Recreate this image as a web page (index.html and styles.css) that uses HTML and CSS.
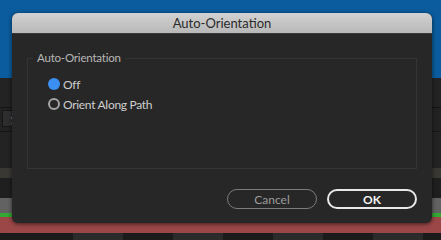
FILE: index.html
```html
<!DOCTYPE html>
<html>
<head>
<meta charset="utf-8">
<link rel="stylesheet" href="styles.css">
</head>
<body>
<div class="app">
  <div class="bg-blue"></div>
  <div class="bg-dark1"></div>
  <div class="bg-field"><span class="field-box">1</span></div>
  <div class="bg-dark2"></div>
  <div class="bg-band"></div>
  <div class="bg-dark3"></div>
  <div class="bg-gray"></div>
  <div class="bg-green"></div>
  <div class="bg-red"></div>
  <div class="bg-checker"></div>

  <div class="dialog">
    <div class="titlebar">Auto-Orientation</div>
    <div class="dialog-body">
      <fieldset class="group">
        <legend class="group-title">Auto-Orientation</legend>
        <div class="options">
          <div class="option"><span class="radio checked"></span><span class="label">Off</span></div>
          <div class="option"><span class="radio"></span><span class="label">Orient Along Path</span></div>
        </div>
      </fieldset>
    </div>
    <div class="footer">
      <button class="btn btn-cancel">Cancel</button>
      <button class="btn btn-ok">OK</button>
    </div>
  </div>
</div>
</body>
</html>
```
FILE: styles.css
```css
html, body {
  margin: 0;
  padding: 0;
  width: 441px;
  height: 240px;
  overflow: hidden;
  background: #1f1f1f;
  font-family: Lato, "Liberation Sans", sans-serif;
}
.app {
  position: relative;
  width: 441px;
  height: 240px;
  display: flex;
  flex-direction: column;
}
.bg-blue { height: 78px; background: #0a5c9e; }
.bg-dark1 { height: 29px; background: #232323; border-bottom: 1px solid #151515; }
.bg-field {
  height: 24px;
  background: #222;
  border-bottom: 1px solid #161616;
  display: flex;
  align-items: flex-start;
  padding-top: 2px;
  box-sizing: border-box;
}
.field-box {
  margin-left: 2px;
  width: 14px;
  height: 17px;
  background: #2e2e2e;
  border: 1px solid #161616;
  color: #bbb;
  font-size: 11px;
  line-height: 17px;
  padding-left: 7px;
  box-sizing: border-box;
}
.bg-dark2 { height: 36px; background: #232323; }
.bg-band { height: 10px; background: #3a3833; }
.bg-dark3 { height: 20px; background: #1f1f1f; }
.bg-gray { height: 15px; background: #626262; }
.bg-green { height: 4px; background: #33a833; }
.bg-red { height: 16px; background: #9c4747; }
.bg-checker {
  flex: 1;
  background: repeating-linear-gradient(90deg, #1b1b1b 0 50px, #2b2b2b 50px 100px);
  background-position: 23px 0;
}

.dialog {
  position: absolute;
  left: 12px;
  top: 13px;
  width: 420px;
  height: 210px;
  background: #272727;
  border-radius: 6px;
  box-shadow: 0 1px 4px rgba(0, 0, 0, 0.6);
  display: flex;
  flex-direction: column;
  overflow: hidden;
}
.titlebar {
  height: 21px;
  flex: none;
  background: linear-gradient(#d2d2d2, #b8b8b8);
  border-bottom: 1px solid #3a3a3a;
  box-sizing: border-box;
  color: #2b2b2b;
  font-size: 13px;
  line-height: 21px;
  text-align: center;
}
.dialog-body {
  padding: 17px 15px 0 15px;
}
.group {
  margin: 0;
  padding: 0;
  border: 1px solid #343434;
  min-width: 0;
}
.group-title {
  margin-left: 5px;
  padding: 0 4px;
  color: #b8b8b8;
  font-size: 11.5px;
  line-height: 14px;
  letter-spacing: -0.2px;
}
.options {
  padding: 9px 0 54px 20px;
  display: flex;
  flex-direction: column;
}
.option {
  height: 20px;
  display: flex;
  align-items: center;
  gap: 3px;
}
.radio {
  width: 12px;
  height: 12px;
  border-radius: 50%;
  border: 2px solid #a4a4a4;
  box-sizing: border-box;
}
.radio.checked {
  border: none;
  background: #3b8ef2;
}
.label {
  color: #cfcfcf;
  font-size: 12px;
  letter-spacing: -0.3px;
}
.footer {
  margin-top: auto;
  padding: 0 15px 14px 0;
  display: flex;
  justify-content: flex-end;
  gap: 10px;
}
.btn {
  width: 90px;
  height: 20px;
  border-radius: 10px;
  background: transparent;
  font-family: Lato, "Liberation Sans", sans-serif;
  font-size: 12px;
  padding: 0;
  box-sizing: border-box;
}
.btn-cancel {
  border: 1.5px solid #7c7c7c;
  color: #9c9c9c;
}
.btn-ok {
  border: 2px solid #e8e8e8;
  color: #f2f2f2;
  font-weight: bold;
}
```
